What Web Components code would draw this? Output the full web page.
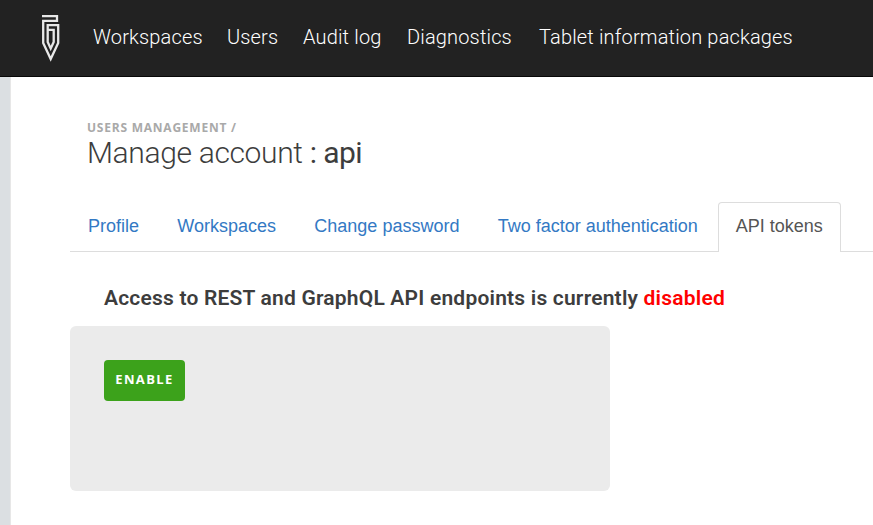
<!DOCTYPE html>
<html lang="en"><head><meta charset="utf-8"><title>Manage account</title>
<style>body{margin:0;background:#fff;font-family:Roboto,"Liberation Sans",sans-serif;overflow:hidden}</style></head>
<body><admin-page></admin-page>
<script>
const define=(name,html)=>customElements.define(name,class extends HTMLElement{
  constructor(){super();this.attachShadow({mode:'open'}).innerHTML=html;}
});
define('brand-mark',`<style>:host{display:block;width:20px;height:48px}svg{display:block}</style>
<svg width="20" height="48" viewBox="0 0 20 48" fill="none" stroke="#e8e8e8" stroke-width="2.300">
<path d="M1 2.200H16V6.800H2.200V29L9.700 45L17.200 29V11.200H6.700V28L9.700 34.500L12.700 28V15.800H7.500"/></svg>`);
define('nav-link',`<style>:host{display:block;color:#fff;font-size:20px;font-weight:300;line-height:24px;letter-spacing:.16px;white-space:nowrap}</style><slot></slot>`);
define('top-bar',`<style>:host{display:flex;box-sizing:border-box;height:77px;background:#222;border-bottom:1px solid #080808;padding:14px 0 0 41px}
nav{display:grid;grid-template-columns:134px 76px 104px 132px auto;margin:11px 0 0 32px;height:24px}</style>
<brand-mark></brand-mark><nav><slot></slot></nav>`);
define('page-heading',`<style>:host{display:block;padding-left:17px;color:#3d3d3d}
.crumb{font:700 12px/14px "Open Sans",sans-serif;letter-spacing:.77px;color:#a9a9a9}
h1{margin:0;font-size:30px;line-height:36px;font-weight:300;letter-spacing:-.35px;white-space:nowrap}h1 ::slotted(b){font-weight:400;letter-spacing:-.55px}</style>
<div class="crumb"><slot name="crumb"></slot></div><h1><slot></slot></h1>`);
define('tab-item',`<style>:host{display:block;box-sizing:border-box;height:50px;padding:13px 17px 0;border:1px solid transparent;border-bottom:0;border-radius:4px 4px 0 0;font:18px/20px "Liberation Sans",sans-serif;color:#3379c4;white-space:nowrap;margin-right:2.300px}
:host([active]){color:#555;border-color:#ddd;background:#fff;margin-left:-.5px}</style><slot></slot>`);
define('tab-list',`<style>:host{display:flex;box-sizing:border-box;height:50px;box-shadow:inset 0 -1px #ddd}</style><slot></slot>`);
define('action-button',`<style>:host{display:block;width:81px;height:41px}button{box-sizing:border-box;width:100%;height:100%;border:0;border-radius:4px;background:#3ca21b;color:#fff;font:700 13px/18px "Open Sans",sans-serif;letter-spacing:1.4px;padding:0 0 3px}</style><button><slot></slot></button>`);
define('status-line',`<style>:host{display:block;padding-left:34px;font-size:21px;line-height:24px;font-weight:600;letter-spacing:.2px;color:#3d3d3d;white-space:nowrap}::slotted(span){color:#f00}</style><slot></slot>`);
define('form-panel',`<style>:host{display:block;box-sizing:border-box;width:540px;height:165px;border-radius:6px;background:#ebebeb;padding:34px}</style><slot></slot>`);
define('admin-page',`<style>:host{display:block;height:525px}
.body{display:flex;height:448px}.rail{box-sizing:border-box;width:11px;flex:none;background:#dbdfe2;border-right:1px solid #e7e7e7}
main{flex:1;min-width:0;padding:44px 0 0 59px}tab-list{margin-top:31px}status-line{margin-top:34px}form-panel{margin-top:16px}</style>
<top-bar><nav-link>Workspaces</nav-link><nav-link>Users</nav-link><nav-link>Audit log</nav-link><nav-link>Diagnostics</nav-link><nav-link>Tablet information packages</nav-link></top-bar>
<div class="body"><div class="rail"></div><main>
<page-heading><span slot="crumb">USERS MANAGEMENT /</span>Manage account <b>: api</b></page-heading>
<tab-list><tab-item>Profile</tab-item><tab-item>Workspaces</tab-item><tab-item>Change password</tab-item><tab-item>Two factor authentication</tab-item><tab-item active>API tokens</tab-item></tab-list>
<status-line>Access to REST and GraphQL API endpoints is currently <span>disabled</span></status-line>
<form-panel><action-button>ENABLE</action-button></form-panel>
</main></div>`);
</script></body></html>
